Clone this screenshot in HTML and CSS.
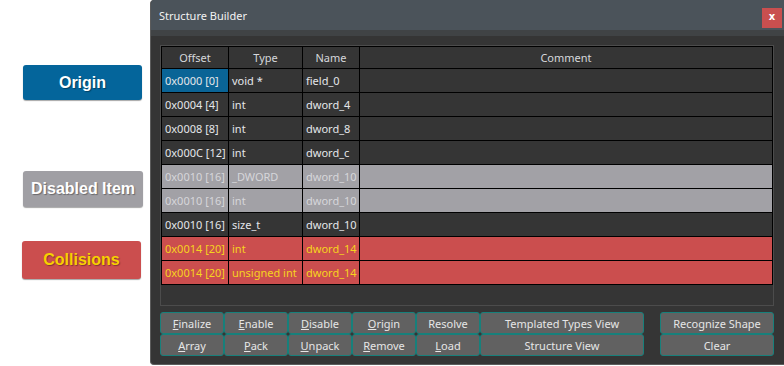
FILE: index.html
```html
<!DOCTYPE html>
<html lang="en">

<head>
  <meta charset="UTF-8">
  <meta name="viewport" content="width=device-width, initial-scale=1.0">
  <title>Structure Builder</title>
  <link rel="stylesheet" href="styles.css">
</head>

<body>
  <div class="page">
    <div class="legend">
      <div class="badge badge-origin">Origin</div>
      <div class="badge badge-disabled">Disabled Item</div>
      <div class="badge badge-collision">Collisions</div>
    </div>

    <div class="window">
      <div class="titlebar">
        <span class="title">Structure Builder</span>
        <button class="close">x</button>
      </div>

      <div class="window-body">
        <div class="table-frame">
          <div class="grid">
            <div class="row head">
              <div class="cell">Offset</div>
              <div class="cell">Type</div>
              <div class="cell">Name</div>
              <div class="cell">Comment</div>
            </div>
            <div class="row">
              <div class="cell origin">0x0000 [0]</div>
              <div class="cell">void *</div>
              <div class="cell">field_0</div>
              <div class="cell"></div>
            </div>
            <div class="row">
              <div class="cell">0x0004 [4]</div>
              <div class="cell">int</div>
              <div class="cell">dword_4</div>
              <div class="cell"></div>
            </div>
            <div class="row">
              <div class="cell">0x0008 [8]</div>
              <div class="cell">int</div>
              <div class="cell">dword_8</div>
              <div class="cell"></div>
            </div>
            <div class="row">
              <div class="cell">0x000C [12]</div>
              <div class="cell">int</div>
              <div class="cell">dword_c</div>
              <div class="cell"></div>
            </div>
            <div class="row disabled">
              <div class="cell">0x0010 [16]</div>
              <div class="cell">_DWORD</div>
              <div class="cell">dword_10</div>
              <div class="cell"></div>
            </div>
            <div class="row disabled">
              <div class="cell">0x0010 [16]</div>
              <div class="cell">int</div>
              <div class="cell">dword_10</div>
              <div class="cell"></div>
            </div>
            <div class="row">
              <div class="cell">0x0010 [16]</div>
              <div class="cell">size_t</div>
              <div class="cell">dword_10</div>
              <div class="cell"></div>
            </div>
            <div class="row collision">
              <div class="cell">0x0014 [20]</div>
              <div class="cell">int</div>
              <div class="cell">dword_14</div>
              <div class="cell"></div>
            </div>
            <div class="row collision">
              <div class="cell">0x0014 [20]</div>
              <div class="cell">unsigned int</div>
              <div class="cell">dword_14</div>
              <div class="cell"></div>
            </div>
          </div>
        </div>

        <div class="actions">
          <button class="btn"><u>F</u>inalize</button>
          <button class="btn"><u>E</u>nable</button>
          <button class="btn"><u>D</u>isable</button>
          <button class="btn"><u>O</u>rigin</button>
          <button class="btn">Resolve</button>
          <button class="btn">Templated Types View</button>
          <span></span>
          <button class="btn">Recognize Shape</button>

          <button class="btn"><u>A</u>rray</button>
          <button class="btn"><u>P</u>ack</button>
          <button class="btn"><u>U</u>npack</button>
          <button class="btn"><u>R</u>emove</button>
          <button class="btn"><u>L</u>oad</button>
          <button class="btn">Structure View</button>
          <span></span>
          <button class="btn">Clear</button>
        </div>
      </div>
    </div>
  </div>
</body>

</html>
```

FILE: styles.css
```css
body {
  margin: 0;
  padding: 0;
  background: #ffffff;
  font-family: "Noto Sans", "Open Sans", sans-serif;
}

.page {
  display: flex;
  width: 784px;
  height: 366px;
  overflow: hidden;
}

/* legend on the left */
.legend {
  width: 150px;
  flex: none;
  display: flex;
  flex-direction: column;
  padding: 65px 0 0 23px;
  box-sizing: border-box;
}

.badge {
  width: 119px;
  display: flex;
  justify-content: center;
  align-items: center;
  border-radius: 3px;
  font-family: "Liberation Sans", Arial, sans-serif;
  font-weight: bold;
  font-size: 16px;
  color: #ffffff;
  text-shadow: 1px 1px 1px rgba(0, 0, 0, 0.35);
  box-shadow: 0 1px 1px rgba(0, 0, 0, 0.35);
}

.badge-origin {
  height: 35px;
  background: #04659b;
}

.badge-disabled {
  height: 36px;
  margin-top: 71px;
  width: 120px;
  background: #a09fa4;
}

.badge-collision {
  height: 38px;
  margin-top: 34px;
  margin-left: -1px;
  background: #cb4e4e;
  color: #f7d100;
}

/* the dialog window */
.window {
  width: 634px;
  height: 365px;
  flex: none;
  box-sizing: border-box;
  background: #353535;
  border-left: 1px solid #5c5c5c;
  border-bottom: 1px solid #5c5c5c;
  border-radius: 4px 0 0 4px;
  overflow: hidden;
}

.titlebar {
  height: 30px;
  background: #4b535a;
  display: flex;
  align-items: center;
  justify-content: space-between;
  padding: 0 2px 0 8px;
  border-bottom: 6px solid #404345;
}

.title {
  color: #f2f2f2;
  font-size: 11px;
}

.close {
  width: 20px;
  height: 20px;
  margin-top: 5px;
  border: none;
  padding: 0 0 2px;
  background: #c94f4f;
  color: #ffffff;
  font-family: "DejaVu Sans", sans-serif;
  font-weight: bold;
  font-size: 10px;
}

.window-body {
  padding: 9px 9px 0 9px;
}

.table-frame {
  width: 614px;
  height: 261px;
  box-sizing: border-box;
  border: 1px solid #4c4c4c;
}

.grid {
  display: flex;
  flex-direction: column;
  gap: 1px;
  padding: 1px;
  background: #000000;
}

.row {
  display: grid;
  grid-template-columns: 66px 73px 56px 1fr;
  gap: 1px;
  height: 23px;
}

.cell {
  background: #353535;
  color: #e4e6ea;
  font-size: 11px;
  line-height: 23px;
  padding-left: 3px;
  white-space: nowrap;
  overflow: hidden;
}

.head {
  height: 21px;
}

.head .cell {
  line-height: 21px;
  text-align: center;
  padding-left: 0;
  color: #d6d8dc;
}

.cell.origin {
  background: #0a6496;
}

.disabled .cell {
  background: #a2a1a6;
  color: #d6d6da;
}

.collision .cell {
  background: #cb4e4e;
  color: #f6d31e;
}

/* buttons */
.actions {
  display: grid;
  grid-template-columns: repeat(5, 64px) 164px 16px 114px;
  grid-auto-rows: 22px;
  margin-top: 6px;
}

.btn {
  background: #616161;
  border: 1px solid #17807b;
  border-radius: 3px;
  color: #e6e6e6;
  font-family: "Noto Sans", "Open Sans", sans-serif;
  font-size: 11px;
  padding: 0;
  cursor: pointer;
}

.btn u {
  text-underline-offset: 1px;
}
```
